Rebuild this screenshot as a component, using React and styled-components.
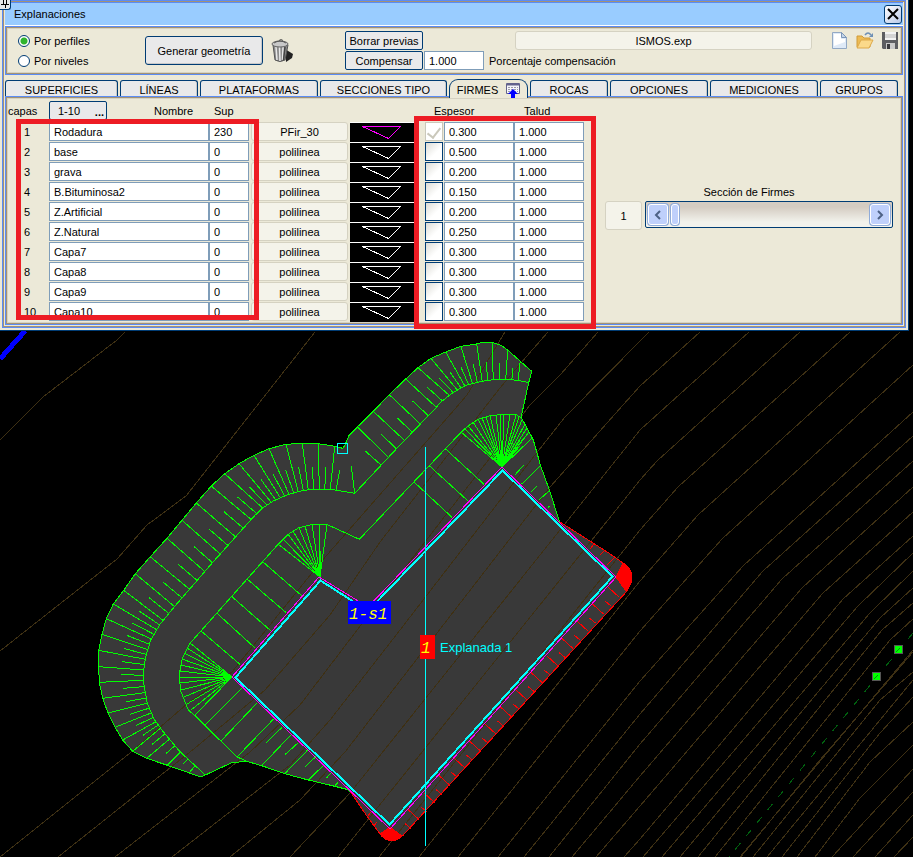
import React, { useState } from 'react';
import styled, { createGlobalStyle, css } from 'styled-components';

const GlobalStyle = createGlobalStyle`
	* {
		box-sizing: border-box;
	}
	body {
		margin: 0;
		background: #fff;
		color: #000;
		font: 11px/14px 'Liberation Sans', Arial, sans-serif;
	}
	button,
	input {
		margin: 0;
		font: inherit;
		color: inherit;
	}
`;

const NAVY = '#003c74';
const BLUE = '#5b8cf5';
const BROWN = '#a39274';
const CREAM = '#ece9d8';

const Page = styled.main`
	margin: 0 3px 1px 0;
	background: #000;
`;

const Dialog = styled.section`
	position: relative;
	margin-right: 4px;
	padding: 0 2px 2px;
	background: ${CREAM};
	border-right: 1px solid ${NAVY};
	border-bottom: 1px solid ${NAVY};
`;

const Frame = styled.div`
	padding: 2px;
	border: 1px solid ${BLUE};
	box-shadow: inset 0 0 0 1px ${BROWN};
`;

const PinButton = styled.button`
	position: absolute;
	top: 0;
	left: 0;
	width: 11px;
	height: 10px;
	padding: 0;
	background: #e6e8ea;
	border: 1px solid ${NAVY};
	border-width: 0 1px 1px 0;
	border-radius: 0 0 3px 0;
	svg {
		display: block;
	}
`;

const TitleBar = styled.header`
	display: flex;
	align-items: center;
	justify-content: space-between;
	height: 23px;
	padding: 0 1px 0 9px;
	background: #99ccff;
	border-bottom: 1px solid #fff;
	box-shadow: 0 -1px 0 ${BLUE};
	h1 {
		margin: 0;
		font-size: 11px;
		font-weight: normal;
	}
`;

const CloseButton = styled.button`
	display: grid;
	place-items: center;
	width: 18px;
	height: 19px;
	padding: 0;
	background: linear-gradient(135deg, #fff, #b9c9e8);
	border: 1px solid ${NAVY};
	border-radius: 3px;
`;

const Group = styled.div`
	border: 1px solid ${BLUE};
	box-shadow: inset 0 0 0 1px ${BROWN}, inset 0 0 0 2px #d6d2c2;
	padding: 2px;
`;

const Toolbar = styled(Group)`
	display: flex;
	align-items: center;
	height: 49px;
`;

const RadioList = styled.div`
	flex: 0 0 137px;
	padding-left: 10px;
`;

const RadioLabel = styled.label`
	display: flex;
	align-items: center;
	gap: 4px;
	height: 20px;
`;

const Radio = styled.input`
	appearance: none;
	width: 12px;
	height: 12px;
	background: #fff;
	border: 1px solid ${NAVY};
	border-radius: 50%;
	&:checked {
		background: radial-gradient(circle, #2fb42f 3px, #fff 4px);
	}
`;

const Button = styled.button`
	width: ${(p) => p.$width || 78}px;
	height: ${(p) => p.$height || 19}px;
	flex: none;
	padding: 0;
	background: #e9e9ea;
	border: 1px solid ${NAVY};
	border-radius: 2px;
	white-space: nowrap;
`;

const GenerateButton = styled(Button)`
	border-radius: 3px;
	box-shadow: inset -1px -1px 0 #c9c9c9;
`;

const IconButton = styled.button`
	display: block;
	flex: none;
	padding: 0;
	background: none;
	border: 0;
	svg {
		display: block;
	}
`;

const TrashButton = styled(IconButton)`
	margin: 0 50px 0 8px;
`;

const Actions = styled.div`
	flex: 1;
	min-width: 0;
`;

const ActionRow = styled.div`
	display: flex;
	align-items: center;
	height: 20px;
`;

const readout = css`
	background: #f4f3ea;
	border: 1px solid #d5d2c2;
	border-radius: 3px;
	text-align: center;
`;

const FileName = styled.output`
	${readout}
	flex: 1;
	height: 19px;
	margin: 0 19px 0 92px;
	line-height: 18px;
`;

const FileIcons = styled.div`
	display: flex;
	gap: 7px;
	padding-right: 1px;
`;

const TextInput = styled.input`
	display: block;
	width: 100%;
	height: 19px;
	padding: 0 4px;
	background: #fff;
	border: 1px solid #7f9db9;
	border-radius: 0;
`;

const PercentLabel = styled.label`
	display: flex;
	flex-direction: row-reverse;
	align-items: center;
	gap: 5px;
	margin-left: 1px;
	white-space: nowrap;
	input {
		width: 60px;
	}
`;

const Tabs = styled.nav`
	display: flex;
	align-items: flex-end;
	gap: 2px;
	height: 21px;
`;

const Tab = styled.button`
	display: flex;
	align-items: center;
	justify-content: center;
	gap: 8px;
	width: ${(p) => p.$width}px;
	height: 16px;
	padding: 2px 0 0;
	background: #e9e9ea;
	border: 1px solid ${NAVY};
	border-bottom: 0;
	border-radius: 3px 3px 0 0;
	box-shadow: inset -1px 0 0 #c9c9c9;
	white-space: nowrap;
	${(p) =>
		p.$active &&
		css`
			position: relative;
			height: 19px;
			margin-bottom: -2px;
			padding: 2px 0 1px;
			background: ${CREAM};
			border-radius: 9px 9px 0 0;
			box-shadow: none;
		`}
`;

const LayersPane = styled(Group)`
	display: flex;
	align-items: flex-start;
	gap: 21px;
`;

const LayersTable = styled.table`
	flex: none;
	width: 576px;
	border-collapse: collapse;
	table-layout: fixed;
	th,
	td {
		padding: 0;
		font-weight: normal;
		text-align: left;
	}
	thead tr {
		height: 23px;
	}
	tbody tr {
		height: 20px;
	}
	tbody th {
		padding-left: 16px;
	}
	td {
		vertical-align: top;
	}
`;

const HeadCell = styled.th`
	&& {
		padding-left: ${(p) => p.$indent || 0}px;
	}
`;

const NameHead = styled.div`
	display: flex;
	align-items: center;
	gap: 47px;
`;

const RangeButton = styled(Button)`
	display: flex;
	justify-content: space-between;
	align-items: center;
	padding: 0 2px 0 8px;
	b {
		align-self: flex-end;
	}
`;

const KindCell = styled.div`
	${readout}
	height: 19px;
	margin: 0 0 0 2px;
	line-height: 18px;
`;

const SwatchCell = styled.div`
	height: 20px;
	margin-left: 2px;
	background: #000;
	border-top: 1px solid #fff;
	svg {
		display: block;
	}
`;

const Check = styled.input`
	appearance: none;
	display: grid;
	place-items: center;
	width: 18px;
	height: 19px;
	margin-left: 11px;
	background: linear-gradient(135deg, #dcdcd6, #fff 60%);
	border: 1px solid ${NAVY};
	&:disabled {
		background: #fff;
		border-color: #cac8bb;
	}
	&:checked::before {
		content: '';
		width: 6px;
		height: 11px;
		border: solid #cac8bb;
		border-width: 0 2px 2px 0;
		rotate: 38deg;
	}
`;

const SectionPicker = styled.div`
	flex: 1;
	margin-top: 86px;
	padding-right: 7px;
	label {
		display: block;
		text-align: center;
	}
`;

const PickerRow = styled.div`
	display: flex;
	gap: 3px;
	margin-top: 2px;
`;

const SectionNumber = styled.output`
	${readout}
	flex: 0 0 37px;
	height: 29px;
	line-height: 28px;
`;

const ScrollBox = styled.div`
	display: flex;
	flex: 1;
	align-items: center;
	height: 27px;
	padding: 0 2px;
	background: linear-gradient(#d4ccc2 20%, #f2f2ec 80%);
	border: 1px solid ${NAVY};
	border-radius: 2px;
`;

const ArrowButton = styled.button`
	display: grid;
	place-items: center;
	width: 20px;
	height: 21px;
	padding: 0;
	background: #bfd0fb;
	border: 1px solid #fff;
	border-radius: 3px;
	box-shadow: 0 0 0 1px #8fabd9;
`;

const Slider = styled.input`
	appearance: none;
	flex: 1;
	min-width: 0;
	height: 21px;
	padding: 0 3px;
	background: none;
	&::-webkit-slider-thumb {
		appearance: none;
		width: 8px;
		height: 21px;
		background: #bfd0fb;
		border: 1px solid #fff;
		border-radius: 3px;
		box-shadow: 0 0 0 1px #8fabd9;
	}
`;

const Mark = styled.div`
	position: absolute;
	top: ${(p) => p.$top}px;
	left: ${(p) => p.$left}px;
	width: ${(p) => p.$width}px;
	height: ${(p) => p.$height}px;
	border: 5px solid #ed1c24;
	pointer-events: none;
`;

const Drawing = styled.svg`
	display: block;
	width: 100%;
	height: auto;
	fill: none;
	text {
		stroke: none;
	}
`;

const TABS = [
	['SUPERFICIES', 113],
	['LÍNEAS', 78],
	['PLATAFORMAS', 118],
	['SECCIONES TIPO', 127],
	['FIRMES', 79],
	['ROCAS', 78],
	['OPCIONES', 98],
	['MEDICIONES', 108],
	['GRUPOS', 78],
];

const LAYERS = [
	['Rodadura', '230', 'PFir_30', '0.300'],
	['base', '0', 'polilinea', '0.500'],
	['grava', '0', 'polilinea', '0.200'],
	['B.Bituminosa2', '0', 'polilinea', '0.150'],
	['Z.Artificial', '0', 'polilinea', '0.200'],
	['Z.Natural', '0', 'polilinea', '0.250'],
	['Capa7', '0', 'polilinea', '0.300'],
	['Capa8', '0', 'polilinea', '0.300'],
	['Capa9', '0', 'polilinea', '0.300'],
	['Capa10', '0', 'polilinea', '0.300'],
];

const TrashIcon = () => (
	<svg width='24' height='26' viewBox='0 0 24 26'>
		<path d='M14 11l8 5-1 4-6 4z' fill='#222' />
		<path d='M2 7l2 15q5 3 10 0l3-15z' fill='#8b8b8b' stroke='#555' />
		<path d='M5 9l1 13M8.500 9l.5 14M12 9l-.5 13' stroke='#e8e8e8' strokeWidth='1.500' />
		<path d='M14 9l-1.500 13' stroke='#444' strokeWidth='1.500' />
		<ellipse cx='9' cy='6' rx='8' ry='3' fill='#c8c8c8' stroke='#666' />
		<path d='M3 5q6-4 12 0M8 2.500q2-2 4 0' fill='none' stroke='#555' />
	</svg>
);

const NewIcon = () => (
	<svg width='18' height='19' viewBox='0 0 18 19'>
		<path d='M1.500 1.500h9l5 5v11h-14z' fill='#dfeaf7' stroke='#93a9c4' />
		<path d='M3 3h7v5h4v3L3 15z' fill='#fff' />
		<path d='M10.500 1.500v5h5z' fill='#c5d6ea' stroke='#7d97b8' />
	</svg>
);

const OpenIcon = () => (
	<svg width='18' height='19' viewBox='0 0 18 19'>
		<path d='M1 16V5h5l2 2h6v9z' fill='#edbc55' stroke='#d19a39' />
		<path d='M1 17l4-8h12l-4 8z' fill='#fbd98a' stroke='#dda94a' />
		<path d='M9 4q3-4 6 0' fill='none' stroke='#6f90b5' strokeWidth='1.500' />
		<path d='M17 2v4h-4z' fill='#6f90b5' />
	</svg>
);

const SaveIcon = () => (
	<svg width='18' height='19' viewBox='0 0 18 19'>
		<path d='M1 1h16v17H2l-1-1z' fill='#5c5d61' />
		<path d='M4 1h11v8H4z' fill='#f3f3f3' />
		<path d='M4 4h11M4 6h11' stroke='#b5b5b5' />
		<path d='M5 12h9v6H5z' fill='#c9c9c9' />
		<path d='M6 13h3v5H6z' fill='#3b3b3f' />
	</svg>
);

const FirmesIcon = () => (
	<svg width='14' height='16' viewBox='0 0 14 16'>
		<path d='M.5 1.500h13v10H.5z' fill='#f5f5fa' stroke='#62628c' />
		<path d='M1 2.500h12' stroke='#62628c' strokeWidth='2' />
		<path d='M2 5.500h10M2 7.500h10M2 9.500h10' stroke='#9a9aa8' strokeDasharray='2 1' />
		<path d='M7 7l5 5H9v4H5v-4H2z' fill='#00f' />
	</svg>
);

const Chevron = ({ d }) => (
	<svg width='8' height='10' viewBox='0 0 8 10' fill='none' stroke='#4d6185' strokeWidth='2'>
		<path d={d} />
	</svg>
);

// crest point -> foot point of every full slope tick
const LOWER_SLOPE = [
	[334.7, 446.3, 330.3, 489.3], [318.3, 443.7, 319.3, 489.3], [302.3, 443.3, 308.3, 490],
	[286, 444.3, 298.3, 491.7], [269, 448.7, 289, 494.3], [254, 455.3, 280, 497.3],
	[239, 463.7, 271.3, 502.3], [224.7, 473.7, 262.7, 508], [211.3, 486, 251.7, 520],
	[196.3, 503, 236, 537.3], [182, 520.3, 221, 554.7], [167, 538.3, 205.3, 572],
	[150.3, 556.7, 190, 589.7], [135.3, 573.7, 174.7, 606.7], [123.7, 590.3, 163, 620.3],
	[113.3, 604, 156, 629.3], [106.3, 618.7, 151.3, 639], [102, 634.3, 148.3, 649.7],
	[98.7, 650.3, 145.3, 659.3], [98.7, 666.7, 143.7, 670], [99.3, 682.3, 144, 680.3],
	[102.7, 698.3, 144.7, 692.7], [108, 713, 147.3, 703.3], [115, 727.3, 151, 713],
	[122.7, 740, 156, 721.7], [132.7, 751.3, 160.3, 728.3], [146.7, 758.3, 169.3, 739.3],
	[167.3, 765.3, 180.7, 751.7], [189, 773, 195, 766],
];

const UPPER_SLOPE = [
	[520.3, 361, 518, 380.7], [507.7, 350, 505.7, 379.7], [492, 342.7, 493.3, 379.7],
	[476.7, 344, 482.3, 381.7], [461, 347, 472.7, 384], [445.7, 352, 465, 386.3],
	[431, 358.3, 457.3, 390], [418, 367.7, 449.3, 395.3], [405.7, 379, 435.7, 406.7],
	[389.3, 394.7, 420, 423.7], [373.3, 411.3, 404, 440], [357.3, 427, 388.3, 457],
];

const INNER_TICKS = [
	[262.7, 561.7, 301.7, 595.7], [246.7, 578.7, 285.7, 612.3], [232, 596.7, 271, 631],
	[217, 613.3, 255, 648], [200.7, 630.7, 240, 664.3], [205, 725, 241.7, 688.3],
	[220.7, 741.3, 256.7, 703.3], [237.3, 756.7, 273.3, 719.3], [261.7, 765.7, 290.7, 735],
	[284.7, 773.7, 307.7, 750], [308.3, 780, 324, 765], [266, 742.7, 281.7, 727.7],
	[285.3, 754.3, 298.3, 742.7], [305.3, 766.7, 315.7, 756.7], [326.7, 777.7, 330.7, 773.3],
	[335, 786, 338.3, 781.7], [445.3, 448.7, 484, 484.3], [429.3, 465.7, 467.7, 500.7],
	[413.7, 481.7, 452, 517.3], [540.3, 466, 521.7, 484], [549.3, 490.7, 539, 500],
	[523.7, 465, 515, 475], [536.7, 486.3, 531, 492.3], [549.3, 506, 548, 508.3],
	[365.3, 451, 381, 465], [351.3, 466, 354.7, 493.3], [339.7, 470.3, 336, 490],
];

const CREST =
	'531.7,371.3 520,361 507.7,350 501.7,345.7 492.7,342.7 483,342.3 476.3,344 461,346.3 445.7,352 431,358.3 418,367.7 405.7,379 389.3,394.7 373.3,411.3 357.3,427 348.7,436 345,445 342.7,448.3 334.7,446.3 318.3,443.7 302.3,443.3 286,444.3 269,448.7 254,455.3 239,463.7 224.7,473.7 211.3,486 196.3,503 182,520.3 167,538.3 150.3,556.7 135.3,573.7 123.7,590.3 113.3,604 106.3,618.7 102,634.3 98.7,650.3 98.7,666.7 99.3,682.3 102.7,698.3 108,713 115,727.3 122.7,740 132.7,751.3 146.7,758.3 167.3,765.3 201,777 231.7,762.7 246.7,761.3 261.7,765.7 284.7,773.7 308.3,780 328.3,784.7 346.7,789.3 350,791.3';
const BENCH_RIGHT = '531.7,371.3 528.7,382.7 521,417.7 525,424 533.3,440 540.7,466 550,491.7 558.3,518.3 560,522';
const RED_EDGE_TOP = '560,522 608.3,552.7 623,563';
const RED_EDGE_SIDE = '628,590 402.7,835.7';
const BENCH =
	'528.7,382.7 518,380.3 505,379.3 493.3,379.7 481.7,381.3 466.7,385 453.3,392.3 440,402.7 436.7,407 396,449.3 354.7,493.3 335.3,490 325,489.3 313.3,489.3 301.7,490.7 286.7,495 273.3,501 261.7,508.7 254.3,516 213.3,561.7 175,606 160,624.3 150.7,640 145.7,656.7 143.7,670 144,685 147.3,703.3 154,719 162.7,731 180,751.7 205,774.7';
const INNER_CREST =
	'521,417.7 516.7,415 503.3,414.3 490,415.7 478.3,419.3 468.3,425.7 461.3,432 359.3,539.3 326.7,524.3 312.7,524.3 298.3,528 288.3,534.3 278.3,544 190,643.3 182.3,658.3 179,676 181,691.7 188.3,710 195,715.7 236.7,756.7 246.7,761.3';

const FANS = [
	{
		apex: [502, 467],
		rim: [
			[461, 432], [464, 428], [468, 425.7], [473, 422], [478, 419], [482, 418], [486, 417],
			[490, 415.7], [496, 415], [500, 414.5], [504, 414.3], [510, 414.5], [516, 415], [519, 417],
			[522, 420], [525, 424], [527, 428], [529, 432], [532, 438], [524, 438], [520, 440],
			[515, 447], [520, 446], [515, 452],
		],
	},
	{
		apex: [320, 577],
		rim: [
			[278, 544], [283, 539], [288, 534], [293, 531], [299, 528], [305, 526], [312, 524.5],
			[319, 524.5], [327, 524.5], [320, 551],
		],
	},
	{
		apex: [232, 677],
		rim: [
			[190, 643], [187, 648], [184, 653], [182, 659], [181, 665], [180, 671], [179, 677],
			[180, 683], [181, 690], [184, 697], [187, 704], [191, 710], [195, 715],
		],
	},
];

const CONTOURS = [
	'505,332 467,395 448,417 320,563 232,672 187,704 130,753 0,857',
	'548,332 526,357 500,388 380,542 330,615 265,690 195,748 58,857',
	'598,332 560,375 530,405 500,445 380,600 300,705 250,752 115,857',
	'649,332 565,417 535,455 400,630 330,720 290,765 172,857',
	'700,332 640,386 550,487 345,752 300,800 230,857',
	'749,332 640,430 560,530 350,793 290,857',
	'800,332 657,461 640,480 338,857',
	'850,332 678,487 640,530 379,857',
	'900,332 698,515 640,581 419,857',
	'913,365 722,539 640,631 458,857',
	'913,412 743,566 640,681 498,857',
	'913,436 763,571 640,714 524,857',
	'913,461 782,579 640,744 549,857',
	'913,487 802,588 640,776 572,857',
	'913,512 823,593 640,806 596,857',
	'913,536 843,599 640,839 624,857',
	'913,553 858,606 643,857',
	'913,571 870,613 662,857',
	'913,588 880,618 680,857',
	'913,603 882,630 698,857',
	'913,619 890,640 715,857',
	'913,650 740,857',
	'913,652 820,760 740,858',
	'913,672 880,700 753,857',
	'913,680 767,857',
	'913,697 880,733 782,857',
	'913,722 870,762 797,857',
	'913,745 860,798 815,857',
	'913,769 832,857',
	'913,792 853,857',
	'913,815 875,857',
	'913,837 894,857',
	'125,332 117,340 43,397 0,440',
	'315,332 300,351 186,496 147,525 117,559 0,651',
];

const line = ([x1, y1, x2, y2]) => `M${x1} ${y1}L${x2} ${y2}`;

// half-length tick between each pair of full ticks
const halfTicks = (ticks) =>
	ticks.slice(1).map((b, i) => {
		const a = ticks[i];
		const fx = (a[2] + b[2]) / 2;
		const fy = (a[3] + b[3]) / 2;
		const cx = (a[0] + b[0]) / 2;
		const cy = (a[1] + b[1]) / 2;
		return [fx + (cx - fx) / 2, fy + (cy - fy) / 2, fx, fy];
	});

const greenTicks = [
	...LOWER_SLOPE,
	...halfTicks(LOWER_SLOPE),
	...UPPER_SLOPE,
	...halfTicks(UPPER_SLOPE),
	...INNER_TICKS,
	...FANS.flatMap(({ apex, rim }) => rim.map((p) => [...p, ...apex])),
];

const redTicks = [
	[594, 544, 590, 549], [605, 550, 600, 555], [614, 558, 607, 565],
	[371, 812, 367, 817], [377, 822, 374, 826],
];
for (let i = 0; i < 14; i++) {
	const x = 608 - 15.37 * i;
	const y = 587 + 17.13 * i;
	redTicks.push([x, y, x + 11, y + 10]);
	redTicks.push([x - 3, y + 14, x + 3, y + 19]);
}

const SiteDrawing = () => (
	<Drawing viewBox='0 331 913 526' shapeRendering='crispEdges' role='img' aria-label='Explanada 1'>
		<path d='M25 331L0 359' stroke='#00f' strokeWidth='5' />
		<polygon
			points={`${CREST} 380,834 392,841 402.7,835.7 628,590 631.700,580 623,563 608.300,552.700 560,522 550,491.700 540.700,466 533.300,440 525,424 521,417.700`}
			fill='#393939'
		/>
		<g stroke='#3e3013'>
			{CONTOURS.map((points) => (
				<polyline key={points} points={points} />
			))}
		</g>
		<path d='M913 633L729 857' stroke='#00600f' strokeDasharray='8 9' />
		<g stroke='#0f0'>
			<polyline points={CREST} />
			<polyline points={BENCH_RIGHT} />
			<polyline points={BENCH} />
			<polyline points={INNER_CREST} />
			<path d={greenTicks.map(line).join('')} />
		</g>
		<g stroke='#f00'>
			<polyline points={RED_EDGE_TOP} />
			<polyline points={RED_EDGE_SIDE} />
			<polyline points='350,791.3 365,813.3 380,834' />
			<path d={redTicks.map(line).join('')} />
			<path d='M616 577L623 563Q632 568 632 578Q631 586 626 591Z' fill='#f00' />
			<path d='M390 827L380 834Q384 840 392 841Q398 840 402 836Z' fill='#f00' />
		</g>
		<polygon
			points='232,677 319,577 368,607 502,467 616,577 390,829'
			stroke='#f0f'
		/>
		<polygon
			points='235.5,677.5 320.5,580.5 368,611 502.5,470.5 612.5,576.5 389.5,824.5'
			stroke='#0ff'
			strokeWidth='2'
		/>
		<path d='M425.5 447V846' stroke='#0ff' />
		<rect x='337.5' y='443.5' width='10' height='10' stroke='#0ff' />
		<rect x='348' y='601' width='43' height='23' fill='#00f' />
		<rect x='420' y='635' width='15' height='24' fill='#f00' />
		<g fill='#ff0' fontFamily="'Liberation Mono', monospace" fontSize='16' fontStyle='italic'>
			<text x='349' y='619'>1-s1</text>
			<text x='421' y='653'>1</text>
		</g>
		<text x='440' y='652' fill='#0ff' fontFamily="'Liberation Sans', sans-serif" fontSize='13'>
			Explanada 1
		</text>
		<g fill='#0f0' stroke='#555'>
			<rect x='894.5' y='645.5' width='8' height='8' />
			<rect x='872.5' y='672.5' width='8' height='8' />
		</g>
		<path d='M896 652l4-4M874 679l4-4' stroke='#00900c' />
	</Drawing>
);

const LayerRow = ({ index, layer }) => {
	const [name, sup, kind, thickness] = layer;
	const first = index === 1;
	return (
		<tr>
			<th scope='row'>{index}</th>
			<td>
				<TextInput aria-label={`Nombre ${index}`} defaultValue={name} />
			</td>
			<td>
				<TextInput aria-label={`Sup ${index}`} defaultValue={sup} />
			</td>
			<td>
				<KindCell>{kind}</KindCell>
			</td>
			<td>
				<SwatchCell>
					<svg width='64' height='18' fill='none' stroke={first ? '#f0f' : '#fff'} shapeRendering='crispEdges'>
						<path d='M12.500 3.500h38l-12 12z' />
					</svg>
				</SwatchCell>
			</td>
			<td>
				<Check type='checkbox' aria-label={`Capa ${index}`} defaultChecked={first} disabled={first} />
			</td>
			<td>
				<TextInput aria-label={`Espesor ${index}`} defaultValue={thickness} />
			</td>
			<td>
				<TextInput aria-label={`Talud ${index}`} defaultValue='1.000' />
			</td>
		</tr>
	);
};

const App = () => {
	const [active, setActive] = useState('FIRMES');
	const [section, setSection] = useState(1);

	return (
		<Page>
			<GlobalStyle />
			<Dialog>
				<Frame>
					<TitleBar>
						<h1>Explanaciones</h1>
						<CloseButton aria-label='Cerrar'>
							<svg width='12' height='12' stroke='#000' strokeWidth='2'>
								<path d='M1 1l10 10M11 1L1 11' />
							</svg>
						</CloseButton>
					</TitleBar>
					<Toolbar>
						<RadioList>
							<RadioLabel>
								<Radio type='radio' name='mode' defaultChecked />
								Por perfiles
							</RadioLabel>
							<RadioLabel>
								<Radio type='radio' name='mode' />
								Por niveles
							</RadioLabel>
						</RadioList>
						<GenerateButton $width={118} $height={29}>
							Generar geometría
						</GenerateButton>
						<TrashButton aria-label='Borrar'>
							<TrashIcon />
						</TrashButton>
						<Actions>
							<ActionRow>
								<Button>Borrar previas</Button>
								<FileName>ISMOS.exp</FileName>
								<FileIcons>
									<IconButton aria-label='Nuevo'>
										<NewIcon />
									</IconButton>
									<IconButton aria-label='Abrir'>
										<OpenIcon />
									</IconButton>
									<IconButton aria-label='Guardar'>
										<SaveIcon />
									</IconButton>
								</FileIcons>
							</ActionRow>
							<ActionRow>
								<Button>Compensar</Button>
								<PercentLabel>
									Porcentaje compensación
									<TextInput defaultValue='1.000' />
								</PercentLabel>
							</ActionRow>
						</Actions>
					</Toolbar>
					<Tabs>
						{TABS.map(([label, width]) => (
							<Tab key={label} $width={width} $active={label === active} onClick={() => setActive(label)}>
								{label}
								{label === 'FIRMES' && <FirmesIcon />}
							</Tab>
						))}
					</Tabs>
					<LayersPane>
						<LayersTable>
							<colgroup>
								<col width='41' />
								<col width='160' />
								<col width='40' />
								<col width='99' />
								<col width='66' />
								<col width='30' />
								<col width='70' />
								<col width='70' />
							</colgroup>
							<thead>
								<tr>
									<HeadCell>capas</HeadCell>
									<th>
										<NameHead>
											<RangeButton $width={58}>
												1-10 <b>...</b>
											</RangeButton>
											Nombre
										</NameHead>
									</th>
									<HeadCell $indent={5}>Sup</HeadCell>
									<td colSpan={2} />
									<HeadCell $indent={20} colSpan={2}>
										Espesor
									</HeadCell>
									<HeadCell $indent={10}>Talud</HeadCell>
								</tr>
							</thead>
							<tbody>
								{LAYERS.map((layer, i) => (
									<LayerRow key={layer[0]} index={i + 1} layer={layer} />
								))}
							</tbody>
						</LayersTable>
						<SectionPicker>
							<label htmlFor='section'>Sección de Firmes</label>
							<PickerRow>
								<SectionNumber>{section}</SectionNumber>
								<ScrollBox>
									<ArrowButton aria-label='Anterior' onClick={() => setSection(Math.max(1, section - 1))}>
										<Chevron d='M6 1L2 5l4 4' />
									</ArrowButton>
									<Slider
										id='section'
										type='range'
										min='1'
										max='20'
										value={section}
										onChange={(e) => setSection(Number(e.target.value))}
									/>
									<ArrowButton aria-label='Siguiente' onClick={() => setSection(Math.min(20, section + 1))}>
										<Chevron d='M2 1l4 4-4 4' />
									</ArrowButton>
								</ScrollBox>
							</PickerRow>
						</SectionPicker>
					</LayersPane>
				</Frame>
				<PinButton aria-label='Fijar'>
					<svg width='9' height='9' stroke='#000' shapeRendering='crispEdges'>
						<path d='M3.500 0v4M6.500 0v4M1 4.500h8M5 4v4' />
					</svg>
				</PinButton>
				<Mark $left={16} $top={119} $width={243} $height={201} />
				<Mark $left={414} $top={116} $width={182} $height={213} />
			</Dialog>
			<SiteDrawing />
		</Page>
	);
};

export default App;
